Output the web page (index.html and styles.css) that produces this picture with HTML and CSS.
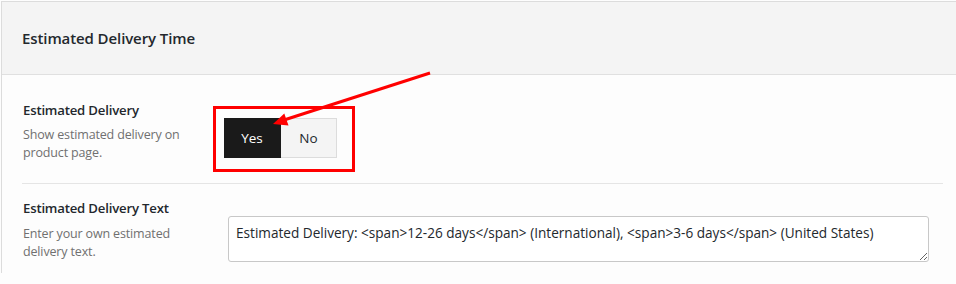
FILE: index.html
```html
<!DOCTYPE html>
<html>
<head>
<link rel="stylesheet" href="styles.css">
</head>
<body>
<div class="panel">
  <div class="panel-head">
    <h2>Estimated Delivery Time</h2>
  </div>

  <div class="panel-body">
    <div class="row">
      <div class="label">
        <h4>Estimated Delivery</h4>
        <p>Show estimated delivery on product page.</p>
      </div>
      <div class="control">
        <div class="marked">
          <div class="toggle">
            <span class="opt on">Yes</span>
            <span class="opt">No</span>
          </div>
        </div>
      </div>
    </div>

    <div class="row last">
      <div class="label">
        <h4>Estimated Delivery Text</h4>
        <p>Enter your own estimated delivery text.</p>
      </div>
      <div class="control">
        <textarea class="field">Estimated Delivery: &lt;span&gt;12-26 days&lt;/span&gt; (International), &lt;span&gt;3-6 days&lt;/span&gt; (United States)</textarea>
      </div>
    </div>
  </div>
</div>

<!-- annotation arrow drawn over the page -->
<svg class="arrow" width="956" height="284" viewBox="0 0 956 284">
  <line x1="430" y1="73" x2="284" y2="120" stroke="#f00" stroke-width="3"/>
  <polygon points="273,124 288.5,125.6 284.3,113.4" fill="#f00"/>
</svg>
</body>
</html>
```

FILE: styles.css
```css
html, body { margin:0; padding:0; }
body {
  position: relative;
  width: 956px;
  height: 284px;
  overflow: hidden;
  background: #fdfdfd;
  font-family: "Open Sans", "Noto Sans", sans-serif;
  color: #23282d;
}

.panel {
  margin: 1px 0 0 1px;
  width: 970px;
  border-left: 1px solid #dcdcdc;
  border-top: 1px solid #dcdcdc;
  background: #fdfdfd;
}

.panel-head {
  height: 72px;
  background: #f4f4f4;
  border-bottom: 1px solid #e0e0e0;
  display: flex;
  align-items: center;
  padding-left: 20px;
}
.panel-head h2 {
  margin: 0;
  font-size: 15px;
  font-weight: 600;
  letter-spacing: -0.1px;
}

.panel-body { padding: 0 0 0 20px; }

.row {
  width: 921px;
  display: flex;
  border-bottom: 1px solid #e5e5e5;
  padding: 26px 0 11px;
}
.row.last { border-bottom: none; padding-top: 15px; }

.label { width: 190px; padding-left: 1px; }
.label h4 {
  margin: 0 0 7px;
  font-size: 13.2px;
  font-weight: 600;
  letter-spacing: -0.2px;
  line-height: 18px;
}
.row.last .label h4 { margin-bottom: 8px; }
.label p {
  margin: 0;
  font-size: 12.5px;
  line-height: 18px;
  color: #707070;
  letter-spacing: -0.15px;
}

.control { flex: 1; }
.row:first-child .control { padding-top: 5px; }

.marked {
  display: inline-block;
  border: 3px solid #f00;
  padding: 9px 15px 11px 8px;
}

.toggle { display: flex; }
.opt {
  width: 57px;
  height: 40px;
  box-sizing: border-box;
  display: flex;
  align-items: center;
  justify-content: center;
  font-size: 13.5px;
  background: #f4f4f4;
  border: 1px solid #dcdcdc;
  border-left: none;
  color: #23282d;
}
.opt + .opt { width: 56px; }
.opt.on {
  background: #1a1a1a;
  border-color: #1a1a1a;
  color: #fff;
}

.field {
  display: block;
  margin: 17px 0 0 15px;
  width: 701px;
  height: 46px;
  box-sizing: border-box;
  border: 1px solid #c8c8c8;
  border-radius: 3px;
  background: #fff;
  padding: 6px 7px;
  font-family: inherit;
  font-size: 13.6px;
  color: #23282d;
  resize: vertical;
}

.arrow {
  position: absolute;
  left: 0;
  top: 0;
  pointer-events: none;
}
```
